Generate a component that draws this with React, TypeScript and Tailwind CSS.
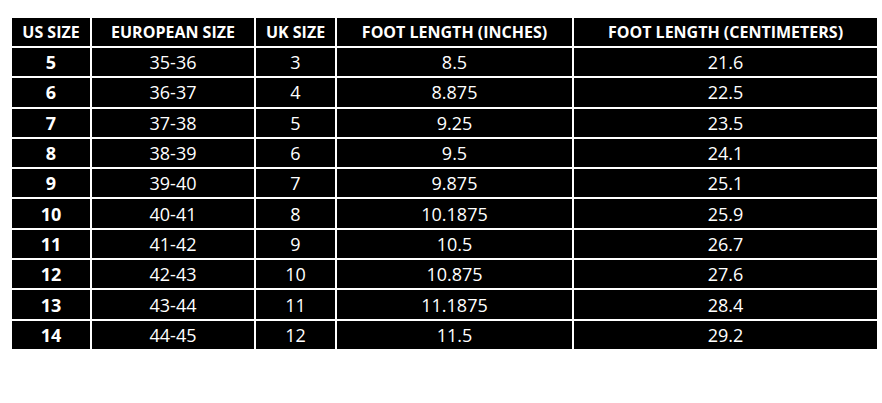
const headers = [
  "US SIZE",
  "EUROPEAN SIZE",
  "UK SIZE",
  "FOOT LENGTH (INCHES)",
  "FOOT LENGTH (CENTIMETERS)",
];

const rows = [
  ["5", "35-36", "3", "8.5", "21.6"],
  ["6", "36-37", "4", "8.875", "22.5"],
  ["7", "37-38", "5", "9.25", "23.5"],
  ["8", "38-39", "6", "9.5", "24.1"],
  ["9", "39-40", "7", "9.875", "25.1"],
  ["10", "40-41", "8", "10.1875", "25.9"],
  ["11", "41-42", "9", "10.5", "26.7"],
  ["12", "42-43", "10", "10.875", "27.6"],
  ["13", "43-44", "11", "11.1875", "28.4"],
  ["14", "44-45", "12", "11.5", "29.2"],
];

export default function App() {
  return (
    <div className="w-[882px] h-[403px] bg-white pt-[18px] pl-[12px] font-['Open_Sans',sans-serif]">
      <div className="grid w-[865px] h-[331px] bg-white gap-[2px] grid-cols-[78px_162px_79px_235px_303px] grid-rows-[28px_repeat(10,1fr)]">
        {headers.map((h) => (
          <div
            key={h}
            className="bg-black text-white font-bold text-[16px] flex items-center justify-center leading-none"
          >
            {h}
          </div>
        ))}
        {rows.map((r) =>
          r.map((c, i) => (
            <div
              key={r[0] + "-" + i}
              className={`bg-black text-white text-[18px] flex items-center justify-center leading-none ${
                i === 0 ? "font-bold" : "font-normal"
              }`}
            >
              {c}
            </div>
          ))
        )}
      </div>
    </div>
  );
}
